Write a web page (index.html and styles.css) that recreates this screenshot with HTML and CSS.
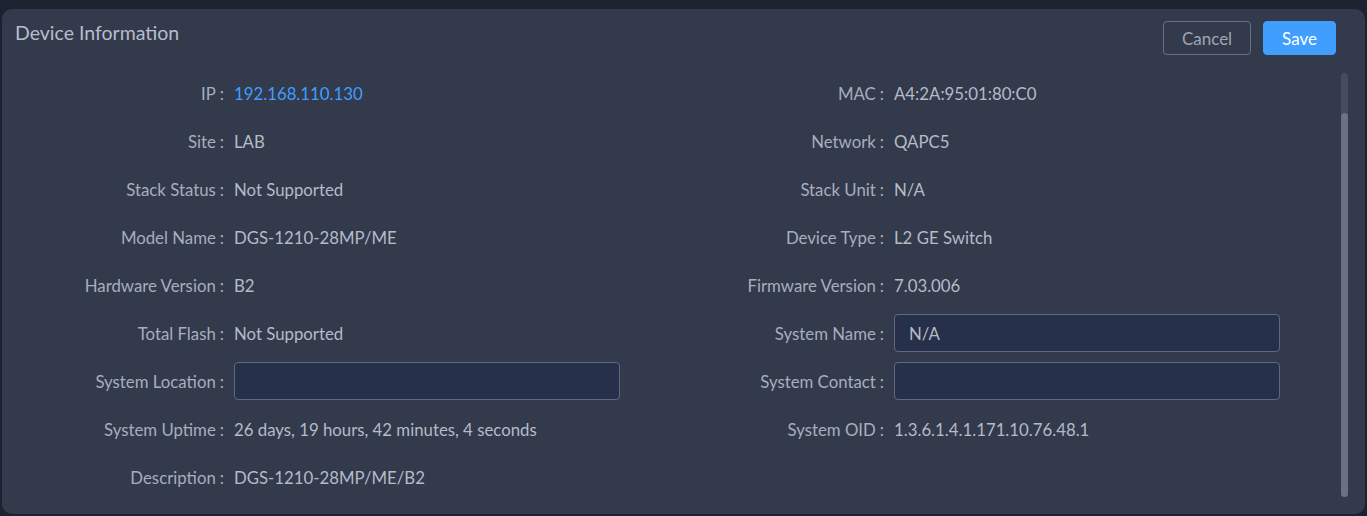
FILE: index.html
```html
<!DOCTYPE html>
<html>
<head>
<meta charset="utf-8">
<link rel="stylesheet" href="styles.css">
</head>
<body>
<div class="panel">
  <div class="header">
    <h1 class="title">Device Information</h1>
    <div class="actions">
      <button class="btn btn-cancel">Cancel</button>
      <button class="btn btn-save">Save</button>
    </div>
  </div>
  <div class="body">
    <div class="grid">
      <div class="row"><span class="label">IP<span class="colon">:</span></span><span class="value link">192.168.110.130</span></div>
      <div class="row"><span class="label">MAC<span class="colon">:</span></span><span class="value">A4:2A:95:01:80:C0</span></div>
      <div class="row"><span class="label">Site<span class="colon">:</span></span><span class="value">LAB</span></div>
      <div class="row"><span class="label">Network<span class="colon">:</span></span><span class="value">QAPC5</span></div>
      <div class="row"><span class="label">Stack Status<span class="colon">:</span></span><span class="value">Not Supported</span></div>
      <div class="row"><span class="label">Stack Unit<span class="colon">:</span></span><span class="value">N/A</span></div>
      <div class="row"><span class="label">Model Name<span class="colon">:</span></span><span class="value">DGS-1210-28MP/ME</span></div>
      <div class="row"><span class="label">Device Type<span class="colon">:</span></span><span class="value">L2 GE Switch</span></div>
      <div class="row"><span class="label">Hardware Version<span class="colon">:</span></span><span class="value">B2</span></div>
      <div class="row"><span class="label">Firmware Version<span class="colon">:</span></span><span class="value">7.03.006</span></div>
      <div class="row"><span class="label">Total Flash<span class="colon">:</span></span><span class="value">Not Supported</span></div>
      <div class="row"><span class="label">System Name<span class="colon">:</span></span><input class="input" type="text" value="N/A"></div>
      <div class="row"><span class="label">System Location<span class="colon">:</span></span><input class="input" type="text" value=""></div>
      <div class="row"><span class="label">System Contact<span class="colon">:</span></span><input class="input" type="text" value=""></div>
      <div class="row"><span class="label">System Uptime<span class="colon">:</span></span><span class="value">26 days, 19 hours, 42 minutes, 4 seconds</span></div>
      <div class="row"><span class="label">System OID<span class="colon">:</span></span><span class="value">1.3.6.1.4.1.171.10.76.48.1</span></div>
      <div class="row"><span class="label">Description<span class="colon">:</span></span><span class="value">DGS-1210-28MP/ME/B2</span></div>
    </div>
    <div class="scrollbar"><div class="thumb"></div></div>
  </div>
</div>
</body>
</html>
```

FILE: styles.css
```css
* { box-sizing: border-box; }
html, body { margin: 0; padding: 0; }
body {
  background: #1d2230;
  font-family: Lato, "Noto Sans", sans-serif;
  width: 1367px;
  height: 516px;
  overflow: hidden;
  padding: 9px 2px 2px 2px;
}
.panel {
  background: #323a4c;
  border-radius: 10px;
  height: 505px;
  position: relative;
  overflow: hidden;
}
.header {
  display: flex;
  justify-content: space-between;
  align-items: flex-start;
  padding: 12px 29px 0 13px;
}
.title {
  margin: 0;
  font-size: 19.5px;
  font-weight: 400;
  color: #b7bdca;
  line-height: 24px;
}
.actions { display: flex; gap: 12px; }
.btn {
  font-family: Lato, "Noto Sans", sans-serif;
  font-size: 17px;
  height: 34px;
  border-radius: 4px;
  cursor: pointer;
  padding: 0;
}
.btn-cancel {
  width: 88px;
  background: transparent;
  border: 1px solid #67718a;
  color: #9ea5b4;
}
.btn-save {
  width: 73px;
  background: #409eff;
  border: 1px solid #409eff;
  color: #ffffff;
}
.body {
  position: relative;
  padding: 19px 0 0 18px;
}
.grid {
  display: grid;
  grid-template-columns: 660px 661px;
  row-gap: 10px;
}
.row {
  display: flex;
  align-items: center;
  height: 38px;
}
.label {
  width: 214px;
  flex: none;
  text-align: right;
  padding-right: 10px;
  font-size: 16.8px;
  color: #a7aebd;
  white-space: nowrap;
}
.colon { margin-left: 4px; }
.value {
  font-size: 16.8px;
  color: #b5bbc7;
  white-space: nowrap;
}
.value.link { color: #409eff; }
.input {
  width: 386px;
  height: 38px;
  background: #27304a;
  border: 1px solid #5d6882;
  border-radius: 4px;
  color: #b5bbc7;
  font-family: Lato, "Noto Sans", sans-serif;
  font-size: 16.8px;
  padding: 0 14px;
  outline: none;
}
.scrollbar {
  position: absolute;
  right: 17px;
  top: 18px;
  width: 7px;
  height: 424px;
  background: #454c5f;
  border-radius: 4px;
}
.thumb {
  position: absolute;
  left: 0;
  right: 0;
  top: 40px;
  bottom: 0;
  background: #6b7287;
  border-radius: 4px;
}
```
